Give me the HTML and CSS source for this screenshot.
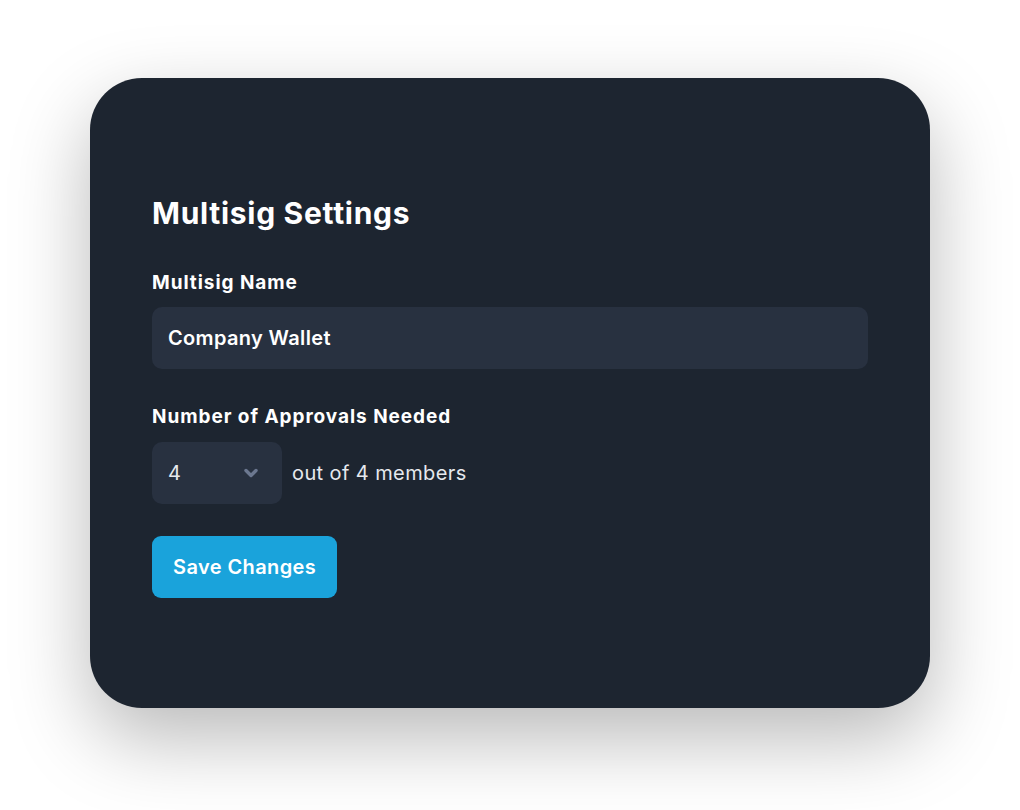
FILE: index.html
```html
<!DOCTYPE html>
<html>
<head>
  <meta charset="utf-8">
  <title>Multisig Settings</title>
  <link rel="stylesheet" href="styles.css">
</head>
<body>
  <div class="card">
    <h1 class="title">Multisig Settings</h1>

    <label class="label" for="msName">Multisig Name</label>
    <div class="input" id="msName">Company Wallet</div>

    <label class="label second">Number of Approvals Needed</label>
    <div class="approvals">
      <div class="select">
        <span>4</span>
        <svg class="chev" width="18" height="14" viewBox="0 0 18 14">
          <path d="M4 4.5 L9 9.5 L14 4.5" fill="none" stroke="#6c7890" stroke-width="3.4" stroke-linecap="round" stroke-linejoin="round"/>
        </svg>
      </div>
      <span class="outof">out of 4 members</span>
    </div>

    <button class="save">Save Changes</button>
  </div>
</body>
</html>
```

FILE: styles.css
```css
html, body { margin: 0; background: #fff; }
body    { min-height: 810px; padding-top: 78px; box-sizing: border-box;
          font-family: Inter, "Noto Sans", sans-serif; font-optical-sizing: none; font-variation-settings: "opsz" 14; }

.card   { box-sizing: border-box; width: 840px; height: 630px; margin-left: 90px;
          background: #1d2530; border-radius: 52px; padding: 117px 62px 0 62px;
          box-shadow: 0 30px 80px rgba(0,0,0,0.28); color: #fff; }

.title  { margin: 0; font-size: 30px; line-height: 36px; font-weight: 700; letter-spacing: 0.7px; }

.label  { display: block; margin-top: 38px; font-size: 19px; line-height: 28px; font-weight: 700; letter-spacing: 0.95px; }
.second { margin-top: 34px; }

.input  { margin-top: 10px; height: 62px; box-sizing: border-box; background: #283140; border-radius: 10px;
          padding: 0 16px; display: flex; align-items: center; font-size: 20px; font-weight: 600; letter-spacing: 0.35px; }

.approvals { margin-top: 11px; display: flex; align-items: center; gap: 10px; }
.select { width: 130px; height: 62px; box-sizing: border-box; background: #283140; border-radius: 10px;
          padding: 0 22px 0 16px; display: flex; align-items: center; justify-content: space-between;
          font-size: 20px; color: #e6e9ee; }
.chev   { display: block; }
.outof  { font-size: 20px; color: #e6e9ee; letter-spacing: 0.4px; }

.save   { margin-top: 32px; height: 62px; padding: 0 21px; border: 0; border-radius: 9px;
          background: #1aa3db; color: #fff; font-family: inherit; font-size: 20px; font-weight: 600; letter-spacing: 0.4px; }
```
